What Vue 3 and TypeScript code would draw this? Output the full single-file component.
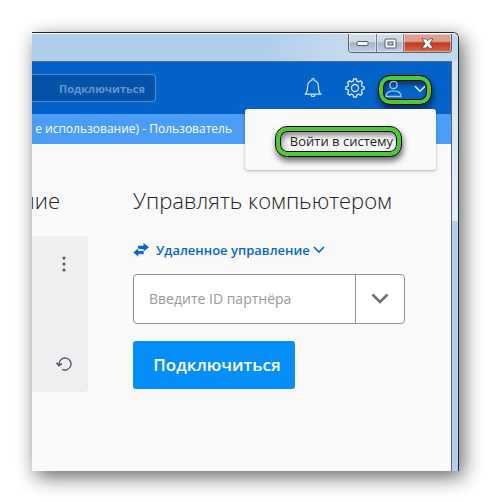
<script setup lang="ts">
import { ref } from 'vue'

const quickId = ref('')
const partnerId = ref('')
const mode = ref('remote')
const menuOpen = ref(true)
</script>

<template>
  <div class="desktop">
    <div class="window">
      <div class="titlebar">
        <div class="caption-buttons">
          <button type="button" class="cap cap-min" aria-label="Свернуть">
            <svg width="14" height="8" viewBox="0 0 14 8"><rect x="1" y="2.500" width="11" height="4" rx="1" fill="#fff" stroke="#555b66" /></svg>
          </button>
          <button type="button" class="cap cap-max" aria-label="Развернуть">
            <svg width="13" height="11" viewBox="0 0 13 11">
              <rect x="1" y="1" width="11" height="9" rx="1" fill="#fff" stroke="#555b66" />
              <rect x="4" y="4" width="5" height="3" fill="#b9cfe4" stroke="#555b66" />
            </svg>
          </button>
          <button type="button" class="cap cap-close" aria-label="Закрыть">
            <svg width="13" height="11" viewBox="0 0 13 11">
              <path d="M1 .8h3.700l1.800 2 1.800-2H12L9 5.500l3 4.700H8.300l-1.800-2-1.800 2H1l3-4.700z" fill="#fff" stroke="#5a4a52" stroke-width=".9" />
            </svg>
          </button>
        </div>
      </div>

      <div class="client">
        <header class="toolbar">
          <div class="quick">
            <input v-model="quickId" type="text" aria-label="Быстрое подключение" />
            <button type="button">Подключиться</button>
          </div>
          <div class="tools">
            <button type="button" class="tool" aria-label="Уведомления">
              <svg width="18" height="20" viewBox="0 0 18 20" fill="none" stroke="#d5e6f8" stroke-width="1.200">
                <path d="M1 16.200h16c-2-1.500-2.500-3.200-2.500-7.200 0-3.600-1.700-5.900-4.300-6.500V1.800a1.200 1.200 0 0 0-2.400 0v.7C5.200 3.100 3.500 5.400 3.500 9c0 4-.5 5.700-2.500 7.200z" stroke-linejoin="round" />
                <path d="M7 16.500a2 2 0 0 0 4 0" />
              </svg>
            </button>
            <button type="button" class="tool" aria-label="Настройки">
              <svg width="20" height="20" viewBox="0 0 20 20" fill="none" stroke="#d5e6f8" stroke-width="1.300" stroke-linejoin="round">
                <path d="M8.600 1h2.800l.5 2.200 1.700.7 1.900-1.200 2 2-1.200 1.900.7 1.700 2.200.5v2.400l-2.200.5-.7 1.700 1.200 1.900-2 2-1.900-1.200-1.700.7-.5 2.200H8.600l-.5-2.200-1.700-.7-1.900 1.200-2-2 1.200-1.900-.7-1.700-2.200-.5V8.800l2.200-.5.7-1.700-1.200-1.900 2-2 1.900 1.200 1.700-.7z" />
                <circle cx="10" cy="10" r="3.500" />
              </svg>
            </button>
            <button type="button" class="account marked" aria-label="Учётная запись" @click="menuOpen = !menuOpen">
              <svg width="17" height="18" viewBox="0 0 17 18" fill="none" stroke="#a9c9ec" stroke-width="1.300">
                <circle cx="8.500" cy="5" r="3.700" />
                <path d="M1 16.500c0-3.600 2.500-5.700 7.500-5.700s7.500 2.100 7.500 5.700z" stroke-linejoin="round" />
              </svg>
              <svg width="12" height="8" viewBox="0 0 12 8" fill="none" stroke="#e3eefa" stroke-width="1.600"><path d="M1 1.200l5 5 5-5" /></svg>
            </button>
          </div>
          <div v-if="menuOpen" class="menu">
            <button type="button" class="menu-item marked">Войти в систему</button>
          </div>
        </header>

        <div class="banner">е использование) - Пользователь</div>

        <main class="content">
          <section class="allow">
            <h2>ние</h2>
            <div class="card">
              <button type="button" class="card-btn" aria-label="Ещё">
                <svg width="4" height="16" viewBox="0 0 4 16" fill="#55585c"><circle cx="2" cy="2" r="1.600" /><circle cx="2" cy="8" r="1.600" /><circle cx="2" cy="14" r="1.600" /></svg>
              </button>
              <button type="button" class="card-btn" aria-label="Обновить">
                <svg width="16" height="14" viewBox="0 0 16 14" fill="none" stroke="#55585c" stroke-width="1.400">
                  <path d="M3 8.500V7a6 6 0 1 1 3.200 5.300" />
                  <path d="M.6 5.800L3 8.700l2.900-2.200" stroke-width="1.700" />
                </svg>
              </button>
            </div>
          </section>

          <section class="control">
            <h2>Управлять компьютером</h2>
            <label class="mode">
              <svg width="16" height="14" viewBox="0 0 16 14" fill="#0766cc">
                <path d="M10.500 0L16 4.300l-5.500 4.300V6H5V2.700h5.500z" />
                <path d="M5.500 5v2.700H11v3.600H5.500v2.700L0 9.500z" stroke="#fafafa" stroke-width=".5" />
              </svg>
              <select v-model="mode" aria-label="Режим">
                <option value="remote">Удаленное управление</option>
              </select>
              <svg width="12" height="8" viewBox="0 0 12 8" fill="none" stroke="#0766cc" stroke-width="1.600"><path d="M1 1l5 5 5-5" /></svg>
            </label>
            <div class="combo">
              <input v-model="partnerId" type="text" placeholder="Введите ID партнёра" aria-label="ID партнёра" />
              <button type="button" aria-label="Недавние">
                <svg width="18" height="12" viewBox="0 0 18 12" fill="none" stroke="#707070" stroke-width="2.600"><path d="M1.500 1.500L9 9l7.500-7.500" /></svg>
              </button>
            </div>
            <button type="button" class="connect">Подключиться</button>
          </section>
        </main>
      </div>
    </div>
  </div>
</template>

<style>
body {
  background: #fff;
}
</style>

<style scoped>
* {
  box-sizing: border-box;
}
.desktop {
  padding: 32px;
  font-family: "Open Sans", "Noto Sans", sans-serif;
}
button,
input,
select {
  margin: 0;
  padding: 0;
  border: 0;
  background: none;
  font-family: inherit;
}
svg {
  display: block;
  flex: none;
}
.window {
  border-top: 1px solid #20262d;
  border-right: 1px solid #20262d;
  border-top-right-radius: 6px;
  background: linear-gradient(#cfe1f2, #e5eef7 188px, #b1d0ec 188px);
  box-shadow: 4px 6px 20px 0 rgba(0, 0, 0, 0.6);
}
.titlebar {
  display: flex;
  justify-content: flex-end;
  height: 28px;
  padding-right: 6px;
  border-top: 1px solid #f4f8fc;
  border-top-right-radius: 5px;
  background: linear-gradient(100deg, #b0cfeb 55%, #c7daee 75%, #bed8ef);
}
.caption-buttons {
  display: flex;
  height: 19px;
  border: 1px solid #596472;
  border-top: 0;
  border-radius: 0 0 4px 4px;
  overflow: hidden;
}
.cap {
  display: flex;
  align-items: center;
  justify-content: center;
  width: 28px;
  border-right: 1px solid #727f8e;
  background: linear-gradient(#d0dbe8 40%, #a5b7cb 50%, #bdd0e3);
  box-shadow: inset 0 0 0 1px rgba(255, 255, 255, 0.4);
}
.cap-max {
  width: 27px;
}
.cap-close {
  width: 47px;
  border-right: 0;
  background: linear-gradient(#dea18f 40%, #c1371f 50%, #d56d4e);
}
.client {
  margin-right: 6px;
  border-top: 1px solid #56657a;
  border-right: 1px solid #56657a;
  background: #fafafa;
}
.toolbar {
  position: relative;
  display: flex;
  align-items: center;
  justify-content: space-between;
  height: 52px;
  padding-right: 20px;
  background: #0463c9;
}
.quick {
  display: flex;
  width: 124px;
  height: 28px;
  border: 1px solid #4d8fd5;
  border-left: 0;
  border-radius: 0 4px 4px 0;
  background: #0453a8;
}
.quick input {
  flex: 1;
  min-width: 0;
}
.quick button {
  padding-right: 10px;
  font-size: 11px;
  font-weight: 700;
  color: #6096d3;
}
.tools {
  display: flex;
  align-items: center;
  gap: 14px;
}
.tool {
  display: flex;
  justify-content: center;
  width: 28px;
}
.marked {
  border: 4px solid #4fc835;
  border-radius: 11px;
  outline: 1px solid #050805;
  box-shadow: inset 0 0 0 1px #050805, inset 2px 4px 6px rgba(0, 0, 0, 0.5), 1px 4px 6px 1px rgba(0, 0, 0, 0.6);
}
.account {
  display: flex;
  align-items: center;
  justify-content: space-between;
  width: 52px;
  height: 28px;
  margin: 4px 0 0 -4px;
  padding: 0 1px 3px 2px;
}
.menu {
  position: absolute;
  z-index: 1;
  top: 47px;
  right: 15px;
  display: flex;
  justify-content: center;
  width: 191px;
  padding: 18px 4px 14px 0;
  border-radius: 3px;
  background: #fafafa;
  box-shadow: 0 1px 3px rgba(0, 0, 0, 0.3);
}
.menu-item {
  height: 29px;
  padding: 0 4px 2px 10px;
  font-size: 13px;
  line-height: 18px;
  color: #222;
  white-space: nowrap;
}
.banner {
  display: flex;
  justify-content: flex-end;
  padding-right: 219px;
  background: #4b9df6;
  font-size: 12px;
  line-height: 30px;
  color: #fff;
  white-space: nowrap;
}
.content {
  display: grid;
  grid-template-columns: 56px minmax(0, 1fr);
  gap: 45px;
  padding: 39px 46px 79px 0;
}
h2 {
  margin: 0;
  font-size: 22px;
  font-weight: 300;
  line-height: 34px;
  color: #222;
  white-space: nowrap;
}
.allow h2 {
  display: flex;
  justify-content: flex-end;
  padding-right: 28px;
  overflow: hidden;
}
.card {
  display: flex;
  flex-direction: column;
  align-items: flex-end;
  justify-content: space-between;
  height: 156px;
  margin-top: 19px;
  padding: 20px 16px 21px 0;
  border-radius: 0 4px 4px 0;
  background: #eeeff1;
}
.card-btn {
  display: flex;
  justify-content: center;
  width: 16px;
}
.mode {
  display: flex;
  align-items: center;
  height: 20px;
  margin-top: 23px;
  gap: 7px;
}
.mode select {
  margin-right: -4px;
  appearance: none;
  font-size: 13px;
  font-weight: 600;
  line-height: 20px;
  color: #0766cc;
}
.combo {
  display: flex;
  height: 50px;
  margin-top: 14px;
  border: 1px solid #929292;
  border-radius: 4px;
  background: #fff;
}
.combo input {
  flex: 1;
  min-width: 0;
  padding: 0 0 2px 15px;
  font-size: 14px;
  color: #333;
}
.combo input::placeholder {
  color: #999;
}
.combo button {
  display: flex;
  align-items: center;
  justify-content: center;
  width: 49px;
  border-left: 1px solid #929292;
}
.connect {
  display: block;
  width: 162px;
  height: 48px;
  margin-top: 17px;
  padding: 0 0 1px 6px;
  border-radius: 3px;
  background: #068ff8;
  font-size: 17px;
  font-weight: 600;
  color: #fff;
}
</style>
